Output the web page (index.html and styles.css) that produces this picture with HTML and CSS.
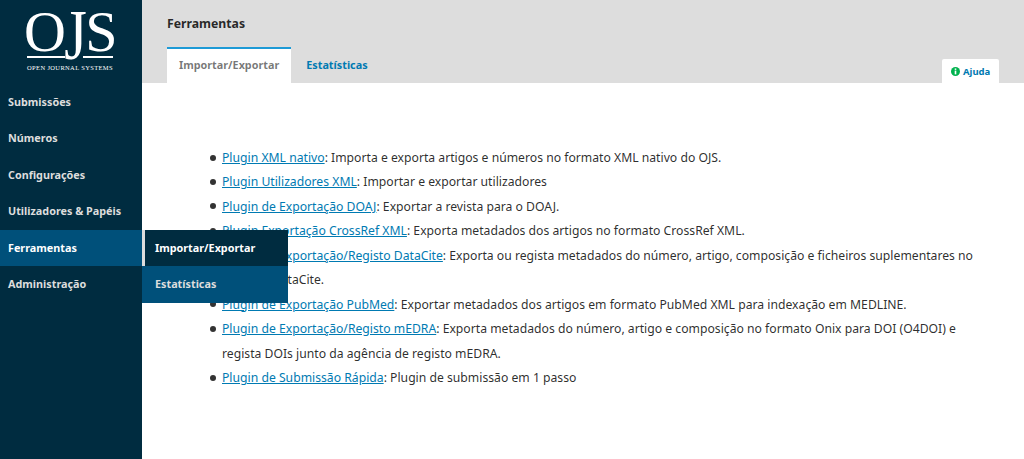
FILE: index.html
```html
<!DOCTYPE html>
<html lang="pt">
<head>
  <meta charset="UTF-8">
  <title>Ferramentas</title>
  <link rel="stylesheet" href="styles.css">
</head>
<body>

  <div class="app">
    <aside class="sidebar">
      <a class="logo" href="#">
        <span class="logo-mark">O<span class="logo-j">J</span>S</span>
        <span class="logo-rules"></span>
        <span class="logo-name">Open Journal Systems</span>
      </a>
      <ul class="side-nav">
        <li><a href="#">Submissões</a></li>
        <li><a href="#">Números</a></li>
        <li><a href="#">Configurações</a></li>
        <li><a href="#">Utilizadores &amp; Papéis</a></li>
        <li class="active">
          <a href="#">Ferramentas</a>
          <ul class="flyout">
            <li class="current"><a href="#">Importar/Exportar</a></li>
            <li><a href="#">Estatísticas</a></li>
          </ul>
        </li>
        <li><a href="#">Administração</a></li>
      </ul>
    </aside>

    <main class="main">
      <header class="page-head">
        <h1>Ferramentas</h1>
        <div class="tabs">
          <a class="tab selected" href="#">Importar/Exportar</a>
          <a class="tab" href="#">Estatísticas</a>
          <a class="help" href="#">
            <svg class="help-icon" viewBox="0 0 10 10" width="9" height="9">
              <circle cx="5" cy="5" r="5" fill="#00b24e"/>
              <rect x="4.1" y="1.6" width="1.8" height="1.6" fill="#fff"/>
              <rect x="4.1" y="4" width="1.8" height="4.2" fill="#fff"/>
            </svg>
            Ajuda
          </a>
        </div>
      </header>

      <section class="content">
        <ul class="plugins">
          <li><a href="#">Plugin XML nativo</a>: Importa e exporta artigos e números no formato XML nativo do OJS.</li>
          <li><a href="#">Plugin Utilizadores XML</a>: Importar e exportar utilizadores</li>
          <li><a href="#">Plugin de Exportação DOAJ</a>: Exportar a revista para o DOAJ.</li>
          <li><a href="#">Plugin Exportação CrossRef XML</a>: Exporta metadados dos artigos no formato CrossRef XML.</li>
          <li><a href="#">Plugin de Exportação/Registo DataCite</a>: Exporta ou regista metadados do número, artigo, composição e ficheiros suplementares no formato DataCite.</li>
          <li><a href="#">Plugin de Exportação PubMed</a>: Exportar metadados dos artigos em formato PubMed XML para indexação em MEDLINE.</li>
          <li><a href="#">Plugin de Exportação/Registo mEDRA</a>: Exporta metadados do número, artigo e composição no formato Onix para DOI (O4DOI) e regista DOIs junto da agência de registo mEDRA.</li>
          <li><a href="#">Plugin de Submissão Rápida</a>: Plugin de submissão em 1 passo</li>
        </ul>
      </section>
    </main>
  </div>

</body>
</html>
```

FILE: styles.css
```css
html, body {
  margin: 0;
  height: 100%;
  overflow: hidden;
}
body {
  font-family: "Noto Sans", sans-serif;
  font-size: 12.2px;
  color: rgba(0,0,0,0.84);
  background: #fff;
}
.app {
  display: flex;
  height: 459px;
}
/* Left column */
.sidebar {
  width: 142px;
  flex: none;
  background: #002c40;
  position: relative;
  z-index: 2;
}
.logo {
  display: flex;
  flex-direction: column;
  align-items: center;
  height: 83.5px;
  padding-right: 2px;
  box-sizing: border-box;
  color: #fff;
  text-decoration: none;
}
.logo-mark {
  font-family: "Liberation Serif", serif;
  font-size: 58px;
  line-height: 50px;
  margin-top: 7px;
  height: 49px;
  letter-spacing: -1.5px;
}
.logo-j {
  display: inline-block;
  transform: scaleY(1.25);
  transform-origin: 50% 12px;
}
.logo-rules {
  width: 86px;
  height: 2px;
  /* the J runs through a gap in the rule */
  background: linear-gradient(to right, #fff 38px, transparent 38px, transparent 56px, #fff 56px);
}
.logo-name {
  font-family: "Liberation Serif", serif;
  font-size: 6.5px;
  line-height: 9px;
  margin-top: 5px;
  text-transform: uppercase;
  letter-spacing: 0.35px;
}
.side-nav, .flyout {
  list-style: none;
  margin: 0;
  padding: 0;
}
.side-nav > li > a {
  display: block;
  height: 36.5px;
  line-height: 36.5px;
  padding-left: 8px;
  font-size: 10.8px;
  font-weight: 700;
  color: #ddd;
  text-decoration: none;
}
.side-nav > li.active {
  position: relative;
}
.side-nav > li.active > a {
  background: #00507a;
  color: #fff;
}
.flyout {
  position: absolute;
  left: 142px;
  top: 0;
  width: 146px;
  background: #00507a;
}
.flyout li a {
  display: block;
  height: 36.5px;
  line-height: 36.5px;
  padding-left: 13px;
  font-size: 10.8px;
  font-weight: 700;
  color: #ddd;
  text-decoration: none;
}
.flyout li.current {
  border-left: 3px solid #ddd;
  background: #002c40;
}
.flyout li.current a {
  padding-left: 10px;
  color: #fff;
}

/* Right column */
.main {
  flex: 1;
  min-width: 0;
}
.page-head {
  background: #ddd;
  height: 83px;
  padding-left: 25px;
  display: flex;
  flex-direction: column;
}
.page-head h1 {
  margin: 0;
  padding-top: 15px;
  font-size: 12.25px;
  line-height: 18px;
  font-weight: 700;
}
.tabs {
  display: flex;
  margin-top: 14px;
  height: 36px;
  font-size: 10.8px;
  font-weight: 700;
}
.tab {
  padding: 0 12px;
  line-height: 32px;
  color: #007ab2;
  text-decoration: none;
  border-top: 2px solid transparent;
  box-sizing: border-box;
}
.tab + .tab {
  margin-left: 3px;
}
.tab.selected {
  background: #fff;
  color: rgba(0,0,0,0.54);
  border-top-color: #1e9ad6;
}
.help {
  margin: 12px 25px 0 auto;
  width: 57px;
  box-sizing: border-box;
  padding-left: 9px;
  display: flex;
  align-items: center;
  gap: 3px;
  background: #fff;
  border-radius: 2px 2px 0 0;
  color: #007ab2;
  font-size: 9.5px;
  text-decoration: none;
}
.content {
  padding: 63px 45px 0 0;
}
.plugins {
  list-style: none;
  margin: 0;
  padding-left: 80px;
  line-height: 24.45px;
}
.plugins li::before {
  content: "";
  display: inline-block;
  width: 6px;
  height: 6px;
  margin: 0 6px 0 -12px;
  border-radius: 50%;
  background: #333;
  vertical-align: 1.5px;
}
.plugins a {
  color: #007ab2;
}
```
